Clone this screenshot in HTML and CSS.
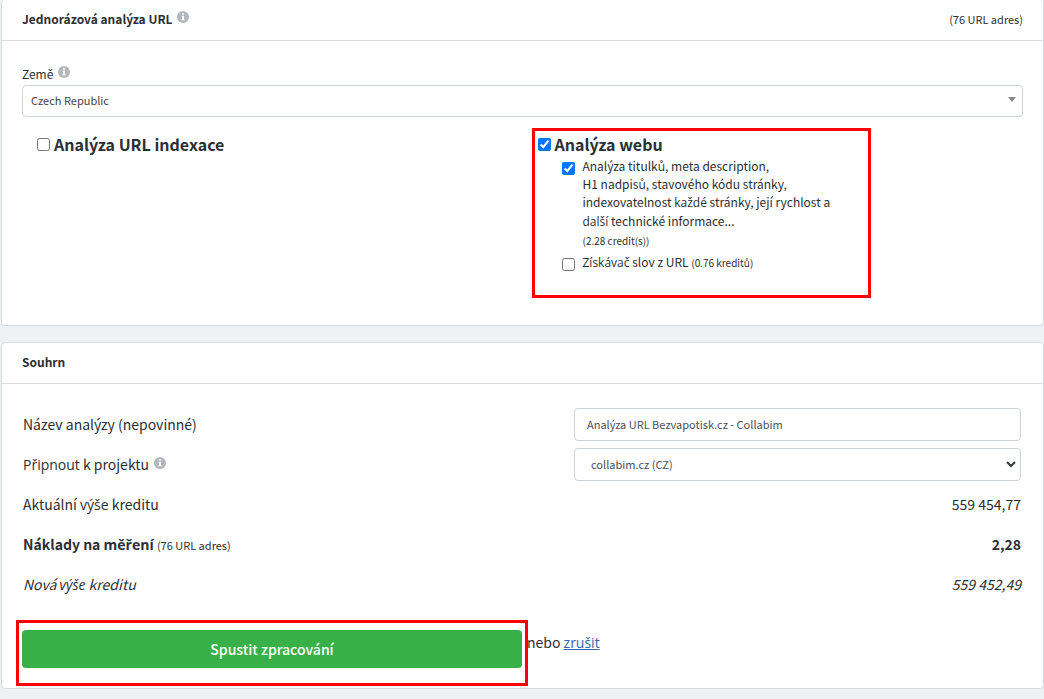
FILE: index.html
```html
<!DOCTYPE html>
<html lang="cs">
<head>
    <meta charset="utf-8">
    <title>Jednorázová analýza URL</title>
    <link rel="stylesheet" href="styles.css">
</head>
<body>
    <svg class="sprite" aria-hidden="true">
        <symbol id="info" viewBox="0 0 12 12">
            <circle cx="6" cy="6" r="6" fill="#b3b7bb"/>
            <path d="M5 2.2h2v1.6H5zM4.6 4.8H7v3.4h.6v1H4.4v-1H5V5.8h-.4z" fill="#fff"/>
        </symbol>
    </svg>
    <form>
        <section class="card card-first">
            <header class="card-header">
                <h2>Jednorázová analýza URL <svg class="info"><use href="#info"/></svg></h2>
                <span class="count">(76 URL adres)</span>
            </header>
            <div class="card-body">
                <label class="country-label" for="country">Země <svg class="info"><use href="#info"/></svg></label>
                <div class="country">
                    <select id="country">
                        <option>Czech Republic</option>
                    </select>
                    <svg class="caret" viewBox="0 0 8 5"><path d="M0 0h8L4 5z" fill="#888"/></svg>
                </div>
                <div class="options">
                    <div class="option">
                        <label class="option-title"><input type="checkbox">Analýza URL indexace</label>
                    </div>
                    <div class="option highlight">
                        <label class="option-title"><input type="checkbox" checked>Analýza webu</label>
                        <label class="sub-option">
                            <input type="checkbox" checked>
                            <span>Analýza titulků, meta description,<br>H1 nadpisů, stavového kódu stránky,<br>indexovatelnost <span class="caron">každé</span> stránky, její rychlost a<br><span class="caron">další</span> technické informace...<br><small>(2.28 credit(s))</small></span>
                        </label>
                        <label class="sub-option">
                            <input type="checkbox">
                            <span><span class="caron">Získávač</span> slov z URL <small>(0.76 kreditů)</small></span>
                        </label>
                    </div>
                </div>
            </div>
        </section>

        <section class="card">
            <header class="card-header">
                <h2>Souhrn</h2>
            </header>
            <div class="card-body summary-body">
                <table class="summary">
                    <tr>
                        <th><label for="name">Název analýzy (nepovinné)</label></th>
                        <td><input class="control" type="text" id="name" value="Analýza URL Bezvapotisk.cz - Collabim"></td>
                    </tr>
                    <tr>
                        <th><label for="project"><span class="caron">Připnout</span> k projektu <svg class="info"><use href="#info"/></svg></label></th>
                        <td>
                            <div class="project">
                                <select class="control" id="project">
                                    <option>collabim.cz (CZ)</option>
                                </select>
                                <svg class="chevron" viewBox="0 0 10 7"><path d="M1 1l4 4 4-4" fill="none" stroke="#343a40" stroke-width="2"/></svg>
                            </div>
                        </td>
                    </tr>
                    <tr>
                        <th>Aktuální <span class="caron">výše</span> kreditu</th>
                        <td>559 454,77</td>
                    </tr>
                    <tr class="cost">
                        <th>Náklady na <span class="caron">měření</span> <small>(76 URL adres)</small></th>
                        <td>2,28</td>
                    </tr>
                    <tr class="new-credit">
                        <th>Nová <span class="caron">výše</span> kreditu</th>
                        <td>559 452,49</td>
                    </tr>
                </table>
                <div class="actions">
                    <div class="submit"><button type="submit">Spustit zpracování</button></div>
                    <span class="cancel">nebo <a class="caron" href="#">zrušit</a></span>
                </div>
            </div>
        </section>
    </form>
</body>
</html>
```
FILE: styles.css
```css
* {
    box-sizing: border-box;
}

body {
    margin: 0;
    background-color: #eef2f5;
    color: #2b2f33;
    font-family: "Noto Sans CJK SC", "Open Sans", sans-serif;
    font-size: 14px;
    line-height: 20px;
}

input, select, button {
    font-family: inherit;
}

/* the main font has no c, r, s, z with a caron */
.caron {
    font-family: "Open Sans", sans-serif;
}

.sprite {
    display: none;
}

.card {
    margin: 0 0 16px 1px;
    background-color: #fff;
    border: 1px solid #d9dcde;
    border-radius: 4px;
}

.card-first {
    border-top: none;
}

.card-header {
    display: flex;
    justify-content: space-between;
    align-items: center;
    height: 41px;
    padding: 0 20px 2px;
    border-bottom: 1px solid #d9dcde;
}

.card-header h2 {
    margin: 0;
    font-size: 12px;
}

.count {
    font-size: 11px;
}

.card-body {
    padding: 23px 20px 20px;
}

.info {
    width: 12px;
    height: 12px;
    margin-left: 2px;
    vertical-align: 1px;
}

.country-label {
    display: block;
    margin-bottom: 1px;
    font-size: 12px;
}

.country {
    position: relative;
}

.country select {
    display: block;
    appearance: none;
    width: 100%;
    height: 32px;
    padding: 0 8px 2px;
    border: 1px solid #ced4da;
    border-radius: 4px;
    background-color: #fff;
    color: #444;
    font-size: 11px;
}

.caret {
    position: absolute;
    right: 7px;
    top: 12px;
    width: 8px;
    height: 5px;
}

.options {
    display: grid;
    grid-template-columns: 1fr 1fr;
    padding: 17px 0 7px;
}

.option {
    margin-left: 15px;
}

.option-title {
    display: flex;
    align-items: center;
    height: 20px;
    gap: 4px;
    font-size: 16px;
    font-weight: bold;
}

input[type="checkbox"] {
    flex: none;
    width: 13px;
    height: 13px;
    margin: 0;
    accent-color: #0075ff;
}

.option.highlight {
    position: relative;
    padding-bottom: 23px;
}

.option.highlight::after {
    content: "";
    position: absolute;
    left: -6px;
    top: -6px;
    bottom: 0;
    width: 333px;
    border: 3px solid #f00;
    pointer-events: none;
}

.sub-option {
    display: flex;
    gap: 8px;
    margin: 3px 0 3px 24px;
    font-size: 12px;
    line-height: 18px;
}

.sub-option input {
    margin-top: 5px;
}

.sub-option small {
    font-size: 10px;
}

.summary-body {
    padding: 20px 21px 20px 20px;
}

.summary {
    width: 100%;
    border-collapse: collapse;
    table-layout: fixed;
}

.summary th,
.summary td {
    height: 40px;
    padding: 0 0 0 1px;
    font-weight: normal;
    text-align: left;
}

.summary th {
    width: 55%;
}

.summary td {
    padding: 0 1px 0 2px;
    text-align: right;
}

.summary .cost th,
.summary .cost td {
    font-weight: bold;
}

.summary small {
    font-size: 11px;
    font-weight: normal;
}

.new-credit {
    font-style: italic;
}

.control {
    display: block;
    width: 100%;
    height: 33px;
    padding: 0 12px;
    border: 1px solid #ced4da;
    border-radius: 4px;
    background-color: #fff;
    color: #495057;
    font-size: 11px;
}

.project {
    position: relative;
}

.project .control {
    appearance: none;
    padding: 0 16px;
}

.chevron {
    position: absolute;
    right: 5px;
    top: 13px;
    width: 10px;
    height: 7px;
}

.actions {
    display: flex;
    align-items: flex-start;
    gap: 5px;
    padding-top: 26px;
}

.submit {
    position: relative;
    width: 50%;
}

.submit::after {
    content: "";
    position: absolute;
    inset: -10px -6px -18px;
    border: 3px solid #f00;
    pointer-events: none;
}

.submit button {
    display: block;
    width: 100%;
    height: 38px;
    border: none;
    border-radius: 4px;
    background-color: #38b048;
    color: #fff;
    font-size: 14px;
    font-weight: 500;
    cursor: pointer;
}

.cancel {
    padding-top: 2px;
}

.cancel a {
    color: #3a62b0;
}
```
